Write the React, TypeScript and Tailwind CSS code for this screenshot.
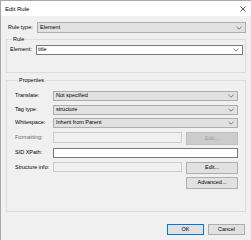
import React from "react";

const Chevron = () => (
  <svg width="6" height="4" viewBox="0 0 6 4" className="shrink-0">
    <path d="M0.5 0.8 L3 3.2 L5.5 0.8" fill="none" stroke="#606060" strokeWidth="0.8" />
  </svg>
);

const Combo = ({ value, className = "" }: { value: string; className?: string }) => (
  <div
    className={
      "flex items-center justify-between h-[10px] bg-[#e1e1e1] border border-[#adadad] pl-[2px] pr-[3px] " +
      className
    }
  >
    <span className="leading-none text-[5.5px] text-black">{value}</span>
    <Chevron />
  </div>
);

const Btn = ({
  label,
  className = "",
  disabled = false,
  primary = false,
}: {
  label: string;
  className?: string;
  disabled?: boolean;
  primary?: boolean;
}) => (
  <div
    className={
      "flex items-center justify-center border text-[5.5px] leading-none " +
      (disabled
        ? "bg-[#cccccc] border-[#bfbfbf] text-[#a0a0a0] "
        : primary
        ? "bg-[#e1e1e1] border-[#0078d7] text-black "
        : "bg-[#e1e1e1] border-[#adadad] text-black ") +
      className
    }
  >
    {label}
  </div>
);

export default function App() {
  return (
    <div
      className="w-[251px] h-[240px] bg-[#f0f0f0] border-t border-l border-[#a9a9a9] overflow-hidden text-black"
      style={{ fontFamily: '"Liberation Sans", Arial, sans-serif' }}
    >
      {/* title bar */}
      <div className="h-[15px] bg-white flex items-center justify-between pl-[4px] pr-[5px]">
        <span className="text-[6px] leading-none">Edit Rule</span>
        <svg width="6" height="6" viewBox="0 0 6 6">
          <path d="M0.5 0.5 L5.5 5.5 M5.5 0.5 L0.5 5.5" stroke="#333" strokeWidth="0.8" />
        </svg>
      </div>

      <div className="pl-[5px] pr-[5px] flex flex-col">
        {/* rule type */}
        <div className="mt-[6px] flex items-center pl-[2px]">
          <span className="w-[29px] shrink-0 text-[5.5px] leading-none">Rule type:</span>
          <Combo value="Element" className="flex-1 h-[11px]" />
        </div>

        {/* Rule group */}
        <fieldset className="mt-[3px] border border-[#dcdcdc] pl-[3px] pr-[2px] pb-[17px]">
          <legend className="ml-[2px] px-[1px] text-[5.5px] leading-[7px]">Rule</legend>
          <div className="mt-[2px] flex items-center">
            <span className="w-[26px] shrink-0 text-[5.5px] leading-none">Element:</span>
            <div className="flex-1 h-[10px] bg-white border border-[#7a7a7a] flex items-center justify-between pl-[1px] pr-[3px]">
              <span className="text-[5.5px] leading-none">title</span>
              <Chevron />
            </div>
          </div>
        </fieldset>

        {/* Properties group */}
        <fieldset className="mt-[4px] border border-[#dcdcdc] pl-[8px] pr-[7px] pb-[22px]">
          <legend className="ml-[3px] px-[1px] text-[5.5px] leading-[7px]">Properties</legend>
          <div className="mt-[7px] flex items-center">
            <span className="w-[38px] shrink-0 text-[5.5px] leading-none">Translate:</span>
            <Combo value="Not specified" className="flex-1" />
          </div>
          <div className="mt-[4px] flex items-center">
            <span className="w-[38px] shrink-0 text-[5.5px] leading-none">Tag type:</span>
            <Combo value="structure" className="flex-1" />
          </div>
          <div className="mt-[3px] flex items-center">
            <span className="w-[38px] shrink-0 text-[5.5px] leading-none">Whitespace:</span>
            <Combo value="Inherit from Parent" className="flex-1" />
          </div>
          <div className="mt-[4px] flex items-start">
            <span className="w-[38px] shrink-0 text-[5.5px] leading-none mt-[3px] text-[#6d6d6d]">Formatting:</span>
            <div className="flex-1 h-[11px] bg-[#f0f0f0] border border-[#cccccc]" />
            <Btn label="Edit..." disabled className="ml-[4px] w-[52px] h-[13px]" />
          </div>
          <div className="mt-[3px] flex items-center">
            <span className="w-[38px] shrink-0 text-[5.5px] leading-none">SID XPath:</span>
            <div className="flex-1 h-[10px] bg-white border border-[#7a7a7a]" />
          </div>
          <div className="mt-[4px] flex items-start">
            <span className="w-[38px] shrink-0 text-[5.5px] leading-none mt-[3px]">Structure info:</span>
            <div className="flex-1 h-[10px] bg-[#f0f0f0] border border-[#cccccc]" />
            <Btn label="Edit..." className="ml-[4px] w-[52px] h-[12px]" />
          </div>
          <div className="mt-[3px] flex justify-end">
            <Btn label="Advanced..." className="w-[52px] h-[12px]" />
          </div>
        </fieldset>

        {/* bottom buttons */}
        <div className="mt-[12px] flex justify-end gap-[4px] pr-[1px]">
          <Btn label="OK" primary className="w-[37px] h-[11px]" />
          <Btn label="Cancel" className="w-[37px] h-[11px]" />
        </div>
      </div>
    </div>
  );
}
